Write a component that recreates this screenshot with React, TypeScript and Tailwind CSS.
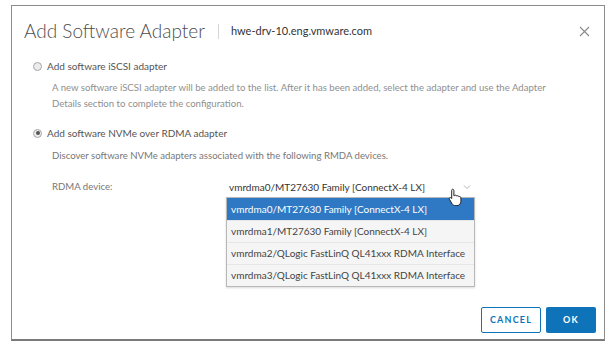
import React from "react";

const font = { fontFamily: "Lato, 'Open Sans', 'Liberation Sans', sans-serif" };

function Radio({ checked }: { checked?: boolean }) {
  return (
    <span className="inline-flex w-[9px] h-[9px] rounded-full border border-[#a8a8a8] bg-[#ececec] items-center justify-center shrink-0">
      {checked && <span className="w-[4px] h-[4px] rounded-full bg-[#555]" />}
    </span>
  );
}

export default function App() {
  const items = [
    "vmrdma0/MT27630 Family [ConnectX-4 LX]",
    "vmrdma1/MT27630 Family [ConnectX-4 LX]",
    "vmrdma2/QLogic FastLinQ QL41xxx RDMA Interface",
    "vmrdma3/QLogic FastLinQ QL41xxx RDMA Interface",
  ];
  return (
    <div className="w-[612px] h-[348px] bg-white overflow-hidden" style={font}>
      <div className="ml-[11px] mt-[5px] w-[594px] h-[336px] border border-[#8c8c8c] border-b-2 border-b-[#7a7a7a] flex flex-col">
        {/* header */}
        <div className="flex items-center pl-[12px] pr-[14px] mt-[13px] h-[24px]">
          <span className="text-[19px] leading-[24px] text-[#4d4d4d] font-light">Add Software Adapter</span>
          <span className="w-px h-[15px] bg-[#d6d6d6] ml-[13px] mr-[12px]" />
          <span className="text-[11px] text-[#333]">hwe-drv-10.eng.vmware.com</span>
          <span className="ml-auto text-[#8a8a8a]">
            <svg width="11" height="11" viewBox="0 0 11 11"><path d="M1 1 L10 10 M10 1 L1 10" stroke="#8a8a8a" strokeWidth="1.1" /></svg>
          </span>
        </div>

        {/* option 1 */}
        <div className="flex items-center gap-[5px] pl-[21px] mt-[15px] h-[16px]">
          <Radio />
          <span className="text-[10px] text-[#555]">Add software iSCSI adapter</span>
        </div>
        <div className="pl-[40px] mt-[6px] text-[9.6px] leading-[16px] text-[#8f8f8f] pr-[30px]">
          A new software iSCSI adapter will be added to the list. After it has been added, select the adapter and use the Adapter
          <br />
          Details section to complete the configuration.
        </div>

        {/* option 2 */}
        <div className="flex items-center gap-[5px] pl-[21px] mt-[13px] h-[16px]">
          <Radio checked />
          <span className="text-[10px] text-[#555]">Add software NVMe over RDMA adapter</span>
        </div>
        <div className="pl-[40px] mt-[7px] text-[9.6px] leading-[16px] text-[#777]">
          Discover software NVMe adapters associated with the following RMDA devices.
        </div>

        {/* RDMA device */}
        <div className="relative flex items-center pl-[40px] mt-[15px] h-[16px]">
          <span className="w-[177px] text-[9.6px] text-[#777]">RDMA device:</span>
          <span className="text-[10px] text-[#333]">vmrdma0/MT27630 Family [ConnectX-4 LX]</span>
          <svg className="absolute left-[451px] top-[5px]" width="8" height="6" viewBox="0 0 8 6"><path d="M1 1.5 L4 4.5 L7 1.5" fill="none" stroke="#b5b5b5" strokeWidth="1" /></svg>

          {/* dropdown list */}
          <div className="absolute left-[214px] top-[18px] w-[249px] border border-[#b8b8b8] bg-[#f5f5f5] shadow-[0_1px_2px_rgba(0,0,0,0.15)]">
            {items.map((t, i) => (
              <div
                key={t}
                className={
                  "h-[22px] flex items-center pl-[4px] text-[10px] " +
                  (i === 0 ? "bg-[#2f79c4] text-white" : "text-[#444] border-t border-[#e6e6e6]")
                }
              >
                {t}
              </div>
            ))}
          </div>

          {/* hand cursor */}
          <svg className="absolute left-[436px] top-[9px]" width="15" height="18" viewBox="0 0 15 18">
            <path
              d="M4.5 1.2c.8 0 1.4.6 1.4 1.4v5.2l.5-.1c.7-.9 2.1-.6 2.3.4.7-.7 2-.4 2.2.6.8-.5 2 0 2 1.1v3.5c0 2.3-1.6 4.3-4 4.3H7.2c-1.3 0-2.3-.6-3-1.6L1.4 11.2c-.5-.8.2-1.8 1.1-1.6.4.1.9.5 1.2.9V2.6c0-.8.2-1.4.8-1.4z"
              fill="#fff"
              stroke="#222"
              strokeWidth="1"
            />
          </svg>
        </div>

        {/* footer */}
        <div className="mt-auto mb-[6px] flex justify-end gap-[5px] pr-[8px]">
          <button className="w-[60px] h-[26px] border border-[#0f73b9] rounded-[2px] text-[#0f73b9] text-[9px] font-bold tracking-[1.2px] bg-white">
            CANCEL
          </button>
          <button className="w-[50px] h-[26px] bg-[#0f73b9] rounded-[2px] text-white text-[9px] font-bold tracking-[1.2px]">
            OK
          </button>
        </div>
      </div>
    </div>
  );
}
